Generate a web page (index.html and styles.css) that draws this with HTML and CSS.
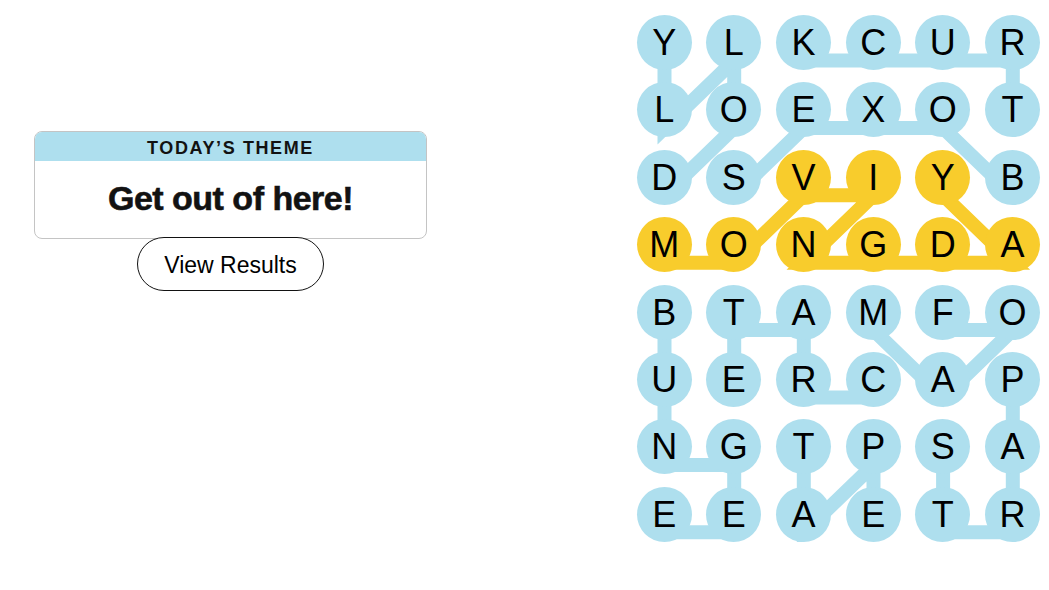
FILE: index.html
```html
<!DOCTYPE html>
<html lang="en">
<head>
    <meta charset="UTF-8">
    <meta name="viewport" content="width=device-width, initial-scale=1.0">
    <title>Strands</title>
    <link rel="stylesheet" href="styles.css">
</head>
<body>
    <div class="app">
        <div class="sidebar">
            <div class="theme">
                <div class="theme-head">TODAY&rsquo;S THEME</div>
                <div class="theme-body">Get out of here!</div>
            </div>
            <button class="results">View Results</button>
        </div>

        <div class="board">
            <!-- word paths, drawn under the letters -->
            <svg class="paths" viewBox="0 0 403.3 526.8" width="403.3" height="526.8">
                <g fill="none" stroke="#aedfee" stroke-width="14" stroke-linejoin="miter">
                    <polyline points="27.5,180.3 97.2,112.9 97.2,45.5 27.5,112.9 27.5,45.5"/>
                    <polyline points="375.8,112.9 375.8,45.5 166.8,45.5"/>
                    <polyline points="375.8,180.3 306.1,112.9 166.8,112.9 97.2,180.3"/>
                    <polyline points="27.5,315.1 27.5,449.9 97.2,449.9 97.2,517.3 27.5,517.3"/>
                    <polyline points="236.5,382.5 166.8,382.5 166.8,315.1 97.2,315.1 97.2,382.5"/>
                    <polyline points="306.1,315.1 375.8,315.1 306.1,382.5 236.5,315.1"/>
                    <polyline points="375.8,382.5 375.8,517.3 306.1,517.3 306.1,449.9"/>
                    <polyline points="166.8,449.9 166.8,517.3 236.5,449.9 236.5,517.3"/>
                </g>
                <polyline fill="none" stroke="#f8cc2c" stroke-width="14" stroke-linejoin="miter"
                    points="27.5,247.7 97.2,247.7 166.8,180.3 236.5,180.3 166.8,247.7 375.8,247.7 306.1,180.3"/>
            </svg>

            <div class="grid">
                <div class="cell">Y</div><div class="cell">L</div><div class="cell">K</div><div class="cell">C</div><div class="cell">U</div><div class="cell">R</div>
                <div class="cell">L</div><div class="cell">O</div><div class="cell">E</div><div class="cell">X</div><div class="cell">O</div><div class="cell">T</div>
                <div class="cell">D</div><div class="cell">S</div><div class="cell gold">V</div><div class="cell gold">I</div><div class="cell gold">Y</div><div class="cell">B</div>
                <div class="cell gold">M</div><div class="cell gold">O</div><div class="cell gold">N</div><div class="cell gold">G</div><div class="cell gold">D</div><div class="cell gold">A</div>
                <div class="cell">B</div><div class="cell">T</div><div class="cell">A</div><div class="cell">M</div><div class="cell">F</div><div class="cell">O</div>
                <div class="cell">U</div><div class="cell">E</div><div class="cell">R</div><div class="cell">C</div><div class="cell">A</div><div class="cell">P</div>
                <div class="cell">N</div><div class="cell">G</div><div class="cell">T</div><div class="cell">P</div><div class="cell">S</div><div class="cell">A</div>
                <div class="cell">E</div><div class="cell">E</div><div class="cell">A</div><div class="cell">E</div><div class="cell">T</div><div class="cell">R</div>
            </div>
        </div>
    </div>
</body>
</html>
```

FILE: styles.css
```css
body {
    margin: 0;
    font-family: "Liberation Sans", Arial, sans-serif;
    color: #121212;
    background: #fff;
}

.app {
    display: flex;
    justify-content: space-between;
    align-items: flex-start;
    padding: 15px 9px 0 34px;
}

.sidebar {
    width: 393px;
    margin-top: 116px;
    display: flex;
    flex-direction: column;
    align-items: center;
}

.theme {
    width: 100%;
    box-sizing: border-box;
    border: 1px solid #c4c4c4;
    border-radius: 8px;
    overflow: hidden;
    text-align: center;
}

.theme-head {
    background: #aedfee;
    height: 29px;
    box-sizing: border-box;
    padding-top: 3px;
    line-height: 26px;
    font-size: 18px;
    font-weight: bold;
    letter-spacing: 1.6px;
}

.theme-body {
    padding: 17px 0 20px;
    line-height: 40px;
    font-size: 34px;
    font-weight: bold;
    letter-spacing: -0.5px;
    -webkit-text-stroke: 0.6px #121212;
}

.results {
    margin-top: -2px;
    width: 187px;
    height: 54px;
    border: 1px solid #121212;
    border-radius: 27px;
    background: #fff;
    font-family: inherit;
    font-size: 23px;
    color: #000;
    padding: 3px 0 0;
}

.board {
    position: relative;
    width: 403.3px;
    height: 526.8px;
}

.paths {
    position: absolute;
    top: 0;
    left: 0;
    overflow: visible;
}

.grid {
    position: relative;
    display: grid;
    grid-template-columns: repeat(6, 55px);
    grid-auto-rows: 55px;
    column-gap: 14.66px;
    row-gap: 12.4px;
}

.cell {
    width: 55px;
    height: 55px;
    border-radius: 50%;
    background: #aedfee;
    text-align: center;
    line-height: 55px;
    font-size: 36px;
    color: #000;
}

.cell.gold {
    background: #f8cc2c;
}
```
